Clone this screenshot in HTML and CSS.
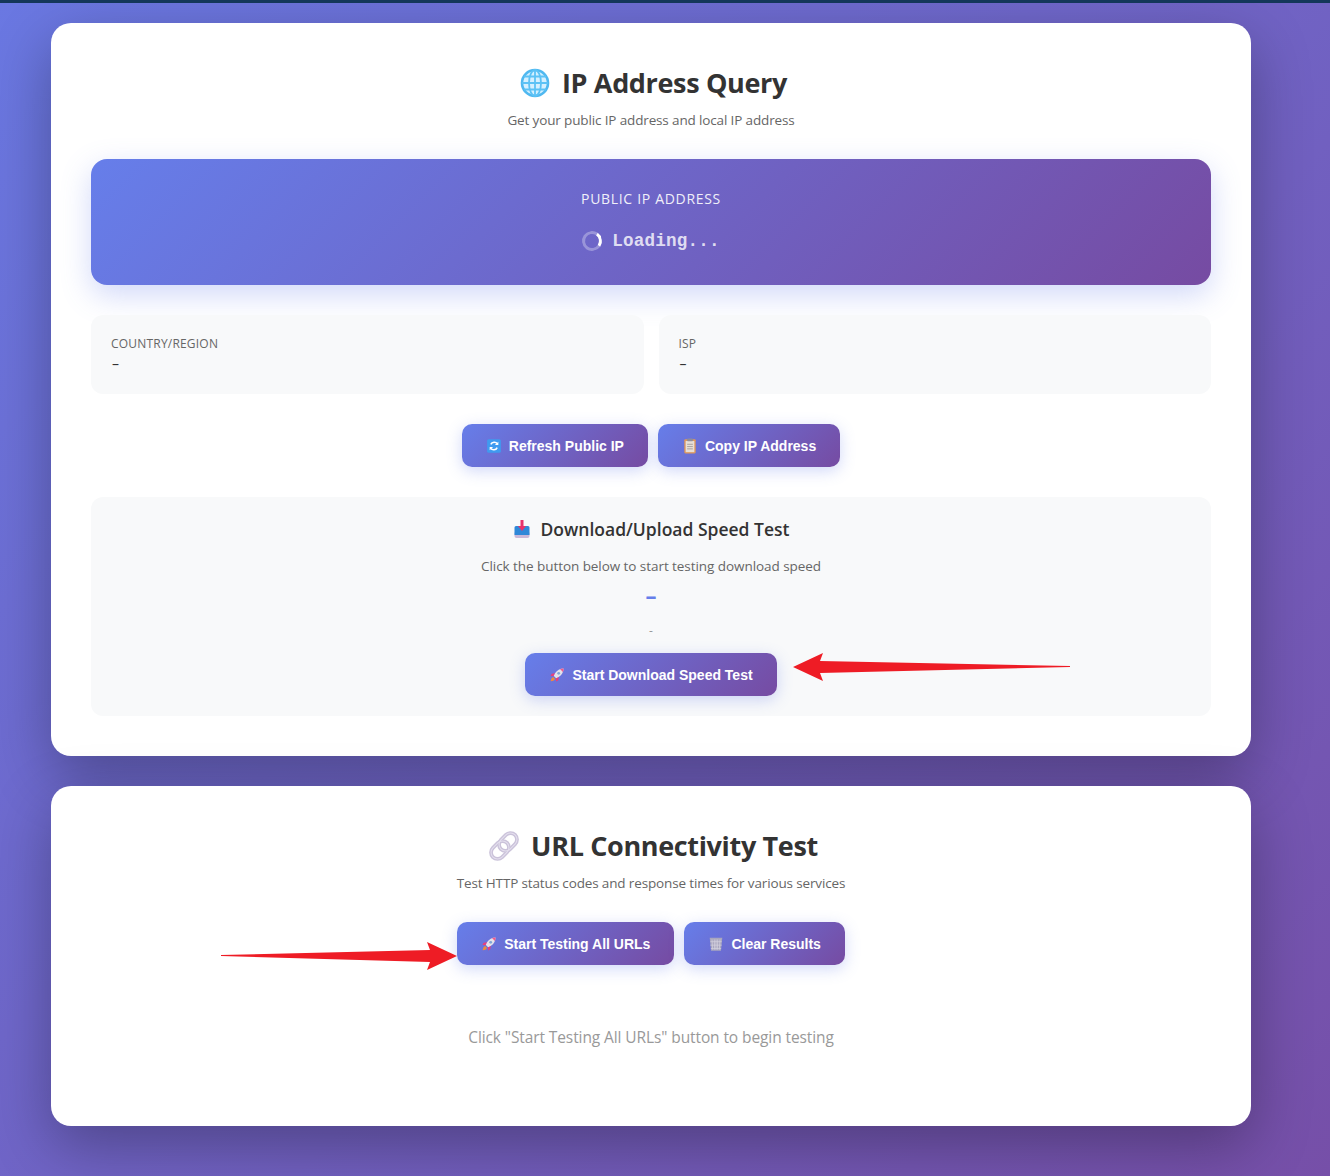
FILE: index.html
```html
<!DOCTYPE html>
<html lang="en">
<head>
    <meta charset="UTF-8">
    <meta name="viewport" content="width=device-width, initial-scale=1.0">
    <title>IP Address Query</title>
    <link rel="stylesheet" href="styles.css">
</head>
<body>
    <svg width="0" height="0" class="defs">
        <symbol id="rocket" viewBox="0 0 16 16">
            <path d="M14.600 1.400c-3.600.1-6.600 1.700-8.400 4.600L4.400 8.600l3 3 2.600-1.800c2.900-1.900 4.500-4.900 4.600-8.400z" fill="#e4e2ea"/>
            <path d="M14.600 1.400c-1.300 0-2.500.3-3.600.7l2.900 2.900c.4-1.100.7-2.300.7-3.600z" fill="#f25a8c"/>
            <circle cx="9.700" cy="6.300" r="1.400" fill="#7fa6d8"/>
            <path d="M6 6.200 2.600 6.800 1.500 9l3 .2zM9.800 10l-.6 3.400-2.200 1.100-.2-3z" fill="#e83f7c"/>
            <path d="M4.300 10.100c-1.400.3-2.300 1.500-2.600 4.200 2.700-.3 3.900-1.200 4.200-2.600z" fill="#f08a3c"/>
        </symbol>
    </svg>

    <div class="container">
        <!-- IP section -->
        <div class="card card-ip">
            <div class="header">
                <h1>
                    <svg class="emoji-title" viewBox="0 0 30 30">
                        <circle cx="15" cy="15" r="13" fill="#d5f0ff" stroke="#4fb8f0" stroke-width="2.600"/>
                        <g fill="none" stroke="#5cc2f5" stroke-width="1.800">
                            <ellipse cx="15" cy="15" rx="6" ry="13"/>
                            <path d="M15 2v26M2 15h26M4 8.500h22M4 21.500h22"/>
                        </g>
                    </svg>
                    IP Address Query
                </h1>
                <p>Get your public IP address and local IP address</p>
            </div>

            <div class="ip-display">
                <div class="ip-label">PUBLIC IP ADDRESS</div>
                <div class="ip-value"><span class="spinner"></span>Loading...</div>
            </div>

            <div class="info-grid">
                <div class="info-item">
                    <div class="info-label">COUNTRY/REGION</div>
                    <div class="info-value">–</div>
                </div>
                <div class="info-item">
                    <div class="info-label">ISP</div>
                    <div class="info-value">–</div>
                </div>
            </div>

            <div class="btn-row">
                <button class="btn">
                    <svg class="emoji" viewBox="0 0 14 14">
                        <rect x="1" y="1" width="12" height="12" rx="1.500" fill="#3f9bf0"/>
                        <path d="M10 5.200A3.300 3.300 0 0 0 4.200 5.600M4 8.800a3.300 3.300 0 0 0 5.800-.4" fill="none" stroke="#fff" stroke-width="1.300"/>
                        <path d="M10.800 3.200v3h-3zM3.200 10.800v-3h3z" fill="#fff"/>
                    </svg>
                    Refresh Public IP
                </button>
                <button class="btn">
                    <svg class="emoji" viewBox="0 0 14 14">
                        <rect x="2" y="1" width="10" height="12.500" rx="1" fill="#e0985a"/>
                        <rect x="3.200" y="2.600" width="7.600" height="9.800" fill="#e8dfd6"/>
                        <path d="M4.500 5.500h5M4.500 7.500h5M4.500 9.500h5" stroke="#a39c9c" stroke-width=".8"/>
                        <rect x="4.500" y=".4" width="5" height="2.400" rx=".6" fill="#8d8d9b"/>
                    </svg>
                    Copy IP Address
                </button>
            </div>

            <div class="speed-box">
                <h3>
                    <svg class="emoji-h3" viewBox="0 0 18 18">
                        <path d="M1.500 12.500h15V16a2 2 0 0 1-2 2h-11a2 2 0 0 1-2-2z" fill="#c9b8d8"/>
                        <path d="M1.500 7.500a1.500 1.500 0 0 1 1.500-1.500h12a1.500 1.500 0 0 1 1.500 1.500V15h-15z" fill="#2f88d8"/>
                        <path d="M7.500 0h3v6H13l-4 5-4-5h2.500z" fill="#e8326a"/>
                    </svg>
                    Download/Upload Speed Test
                </h3>
                <p class="speed-hint">Click the button below to start testing download speed</p>
                <div class="speed-value">–</div>
                <div class="speed-sub">-</div>
                <button class="btn">
                    <svg class="emoji"><use href="#rocket"/></svg>
                    Start Download Speed Test
                </button>
            </div>
        </div>

        <!-- URL section -->
        <div class="card card-url">
            <div class="header">
                <h1>
                    <svg class="emoji-title" viewBox="0 0 30 30">
                        <g fill="none" stroke="#cbc3da" stroke-width="3.800">
                            <rect x="12.500" y="1" width="13" height="20" rx="6.500" transform="rotate(45 19 11)"/>
                            <rect x="4.500" y="9" width="13" height="20" rx="6.500" transform="rotate(45 11 19)"/>
                        </g>
                        <g fill="none" stroke="#e4dfee" stroke-width="1">
                            <rect x="12.500" y="1" width="13" height="20" rx="6.500" transform="rotate(45 19 11)"/>
                            <rect x="4.500" y="9" width="13" height="20" rx="6.500" transform="rotate(45 11 19)"/>
                        </g>
                    </svg>
                    URL Connectivity Test
                </h1>
                <p>Test HTTP status codes and response times for various services</p>
            </div>

            <div class="btn-row">
                <button class="btn">
                    <svg class="emoji"><use href="#rocket"/></svg>
                    Start Testing All URLs
                </button>
                <button class="btn">
                    <svg class="emoji" viewBox="0 0 14 14">
                        <path d="M1.500 1.500h11l-1.200 11.500H2.700z" fill="#a9a6be"/>
                        <path d="M3.500 3l.6 9M5.500 3l.3 9M7 3v9M8.500 3l-.3 9M10.500 3l-.6 9M2 5h10M2 8h10M2.500 11h9" stroke="#d6d3e0" stroke-width=".6"/>
                    </svg>
                    Clear Results
                </button>
            </div>

            <div class="empty-note">Click "Start Testing All URLs" button to begin testing</div>
        </div>
    </div>

    <!-- red annotation arrows -->
    <svg class="arrow arrow-speed" viewBox="0 0 278 30" width="278" height="30">
        <path d="M0 15 30 1l-3 8L277 14v1L27 21l3 8z" fill="#ee1c25"/>
    </svg>
    <svg class="arrow arrow-urls" viewBox="0 0 236 30" width="236" height="30">
        <path d="M236 15 206 1l3 8L0 14v1L209 21l-3 8z" fill="#ee1c25"/>
    </svg>
</body>
</html>
```

FILE: styles.css
```css
* {
    box-sizing: border-box;
}
body {
    font-family: 'Open Sans', 'Noto Sans', sans-serif;
    background: linear-gradient(135deg, #6a78e2 0%, #764fa8 100%);
    margin: 0;
    padding: 23px 79px 50px 51px;
    min-height: 1176px;
    color: #333;
    position: relative;
}
body::before {
    content: "";
    position: absolute;
    top: 0;
    left: 0;
    right: 0;
    height: 3px;
    background: #14375a;
}
.defs {
    position: absolute;
}
.container {
    max-width: 1200px;
    margin: 0 auto;
    display: flex;
    flex-direction: column;
    gap: 30px;
}
.card {
    background: white;
    border-radius: 20px;
    padding: 40px;
    box-shadow: 0 20px 60px rgba(0, 0, 0, 0.3);
}
.header {
    text-align: center;
    margin-bottom: 29px;
}
.header h1 {
    margin: 0 0 8px;
    padding-left: 5px;
    font-size: 27px;
    line-height: 40px;
    letter-spacing: -0.35px;
    font-weight: 700;
    color: #333;
    display: flex;
    align-items: center;
    justify-content: center;
    gap: 12px;
}
.header p {
    margin: 0;
    font-size: 13.5px;
    line-height: 19px;
    letter-spacing: -0.14px;
    color: #666;
}
.emoji-title {
    width: 30px;
    height: 30px;
}
.ip-display {
    background: linear-gradient(135deg, #667eea 0%, #764ba2 100%);
    border-radius: 16px;
    height: 126px;
    padding: 30px;
    margin-bottom: 30px;
    text-align: center;
    color: white;
    box-shadow: 0 10px 30px rgba(102, 126, 234, 0.3);
}
.ip-label {
    font-size: 14px;
    line-height: 19px;
    letter-spacing: 0.68px;
    opacity: 0.9;
    margin-bottom: 19px;
}
.ip-value {
    font-family: 'Liberation Mono', monospace;
    font-size: 17.6px;
    font-weight: 700;
    letter-spacing: 0.2px;
    line-height: 28px;
    display: flex;
    align-items: center;
    justify-content: center;
    gap: 10px;
    color: rgba(255, 255, 255, 0.8);
}
.spinner {
    width: 20px;
    height: 20px;
    border: 3px solid rgba(255, 255, 255, 0.3);
    border-top-color: white;
    border-radius: 50%;
    transform: rotate(80deg);
}
.info-grid {
    display: grid;
    grid-template-columns: 1fr 1fr;
    gap: 15px;
    margin-bottom: 30px;
}
.info-item {
    background: #f8f9fa;
    border-radius: 12px;
    padding: 21px 20px 20px;
    height: 79px;
}
.info-label {
    font-size: 12px;
    line-height: 16px;
    letter-spacing: 0.2px;
    color: #666;
    margin-bottom: 2px;
}
.info-value {
    font-size: 14px;
    line-height: 19px;
    color: #333;
    padding-left: 1px;
}
.btn-row {
    display: flex;
    justify-content: center;
    gap: 10px;
    margin-bottom: 30px;
}
.btn {
    background: linear-gradient(135deg, #667eea 0%, #764ba2 100%);
    color: white;
    height: 43px;
    padding: 0 24px;
    border: none;
    border-radius: 10px;
    font-family: 'Liberation Sans', Arial, sans-serif;
    font-size: 14px;
    font-weight: 700;
    cursor: pointer;
    display: inline-flex;
    align-items: center;
    justify-content: center;
    gap: 7px;
    box-shadow: 0 4px 15px rgba(102, 126, 234, 0.3);
}
.emoji {
    width: 16px;
    height: 16px;
}
.speed-box {
    background: #f8f9fa;
    border-radius: 12px;
    padding: 19px 20px 20px;
    text-align: center;
    height: 219px;
}
.speed-box h3 {
    margin: 0 0 15px;
    font-size: 17.5px;
    line-height: 26px;
    font-weight: 600;
    color: #333;
    display: flex;
    align-items: center;
    justify-content: center;
    gap: 10px;
}
.emoji-h3 {
    width: 18px;
    height: 18px;
}
.speed-hint {
    margin: 0 0 7px;
    font-size: 13.5px;
    line-height: 19px;
    letter-spacing: -0.06px;
    color: #666;
}
.speed-value {
    font-size: 22px;
    line-height: 24px;
    font-weight: 700;
    color: #667eea;
}
.speed-sub {
    font-size: 12px;
    line-height: 16px;
    margin: 16px 0 14px;
    color: #999;
}
.card-url .btn-row {
    margin-bottom: 0;
}
.empty-note {
    text-align: center;
    padding: 61px 0 38px;
    font-size: 15.5px;
    line-height: 22px;
    letter-spacing: -0.1px;
    color: #999;
}
.arrow {
    position: absolute;
}
.arrow-speed {
    left: 793px;
    top: 652px;
}
.arrow-urls {
    left: 221px;
    top: 941px;
}
```
